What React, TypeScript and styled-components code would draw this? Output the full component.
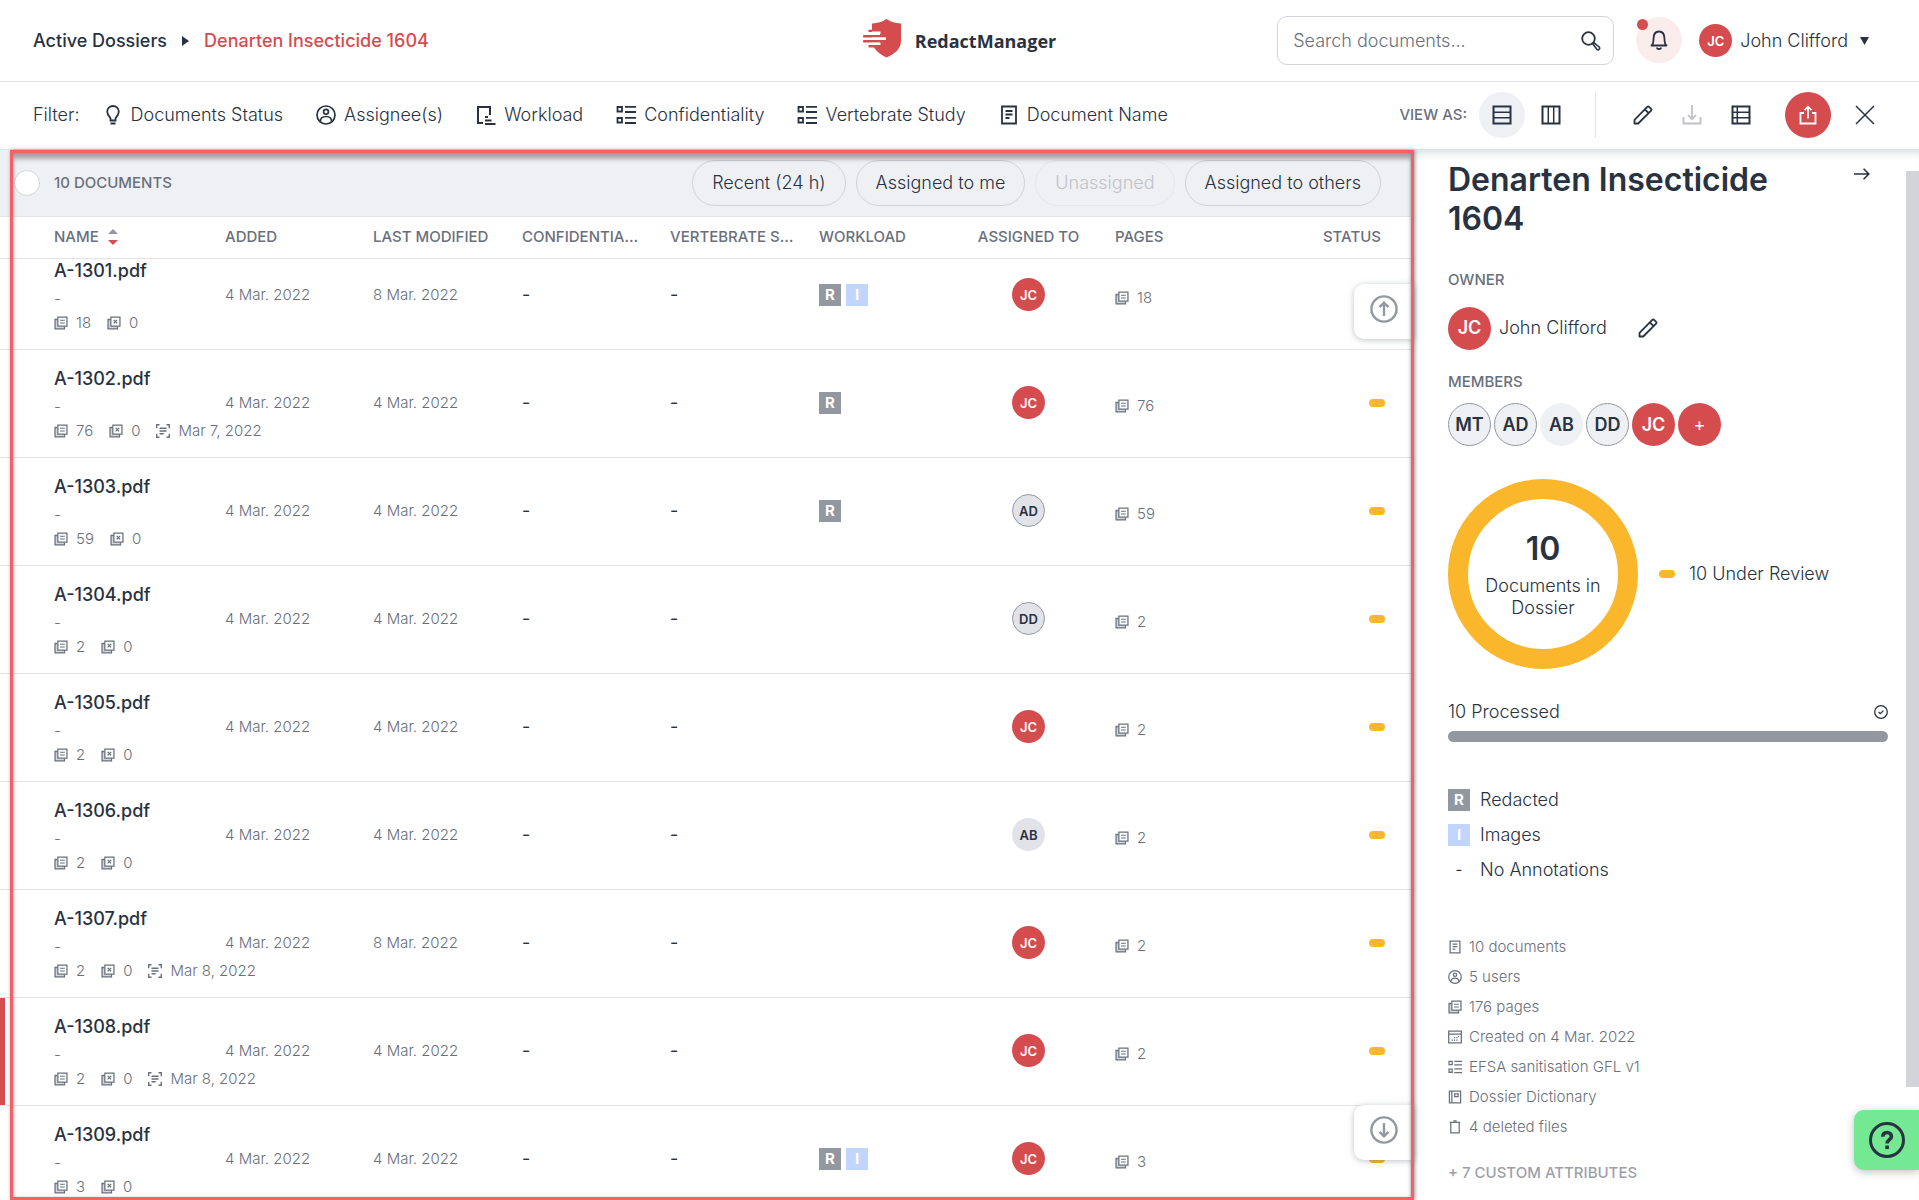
import React, { useLayoutEffect, useRef } from 'react';
import styled, { createGlobalStyle, css } from 'styled-components';

const c = {
  text: '#283241',
  muted: '#6a707b',
  soft: '#9398a0',
  red: '#d54c4f',
  yellow: '#fab72c',
  line: '#e2e4e8',
  panel: '#eff0f4',
};

const Global = createGlobalStyle`
  *, *::before, *::after { box-sizing: border-box; }
  body { margin: 0; background: #fff; color: ${c.text}; font-family: Inter, "Open Sans", sans-serif; font-size: 18px; font-weight: 300; line-height: 22px; }
  button, input { font: inherit; color: inherit; }
  button { border: 0; padding: 0; background: none; cursor: pointer; }
  a { color: inherit; text-decoration: none; }
  h1, h2, p, ul { margin: 0; padding: 0; }
  ul { list-style: none; }
  svg { display: block; flex: none; }
`;

/* ---------- icons ---------- */

const Stroke = styled.svg.attrs<{ $s?: number; $w?: number }>(({ $s = 20, $w = 2 }) => ({
  width: $s,
  height: $s,
  viewBox: '0 0 20 20',
  fill: 'none',
  stroke: 'currentColor',
  strokeWidth: $w,
  'aria-hidden': true,
}))<{ $s?: number; $w?: number }>``;

const BulbIcon = () => (
  <Stroke $w={1.8}><path d="M7.500 15.500v-2.200C6.300 12 4.200 9.800 4.200 6.800a5.800 5.800 0 0 1 11.600 0c0 3-2.100 5.200-3.300 6.500v2.200zM7.500 18.500h5" /></Stroke>
);
const UserIcon = ({ s }: { s?: number }) => (
  <Stroke $s={s} $w={1.7}><circle cx="10" cy="10" r="9" /><circle cx="10" cy="6.800" r="2.400" /><path d="M4.300 16.800c0-3.500 2.300-5.300 5.700-5.300s5.700 1.800 5.700 5.300" /></Stroke>
);
const WorkloadIcon = () => (
  <Stroke><path d="M7 18H2V2h12v8M9 12h3M9 15.500h6.500M9 19h10.500" /></Stroke>
);
const ListIcon = ({ s }: { s?: number }) => (
  <Stroke $s={s} $w={1.8}><path d="M1.500 2h4.500v4.500H1.500zM1.500 13h4.500v4.500H1.500zM9 1.800h11M9 7h11M9 12.800h11M9 18h11" /></Stroke>
);
const DocIcon = ({ s }: { s?: number }) => (
  <Stroke $s={s} $w={1.8}><path d="M3 1.500h14v17H3zM6.500 6h7M6.500 9.500h7M6.500 13h4" /></Stroke>
);
const PagesIcon = () => (
  <Stroke $s={14} $w={1.8}><path d="M5 5H1.500v13.500H15V15" fill="#d3d6db" /><path d="M5.500 1.500h13v13h-13z" fill="#fff" /><path d="M8.500 6h7M8.500 10h7" strokeWidth="1.600" /></Stroke>
);
const ExcludedIcon = () => (
  <Stroke $s={14} $w={1.8}><path d="M5 5H1.500v13.500H15V15" fill="#d3d6db" /><path d="M5.500 1.500h13v13h-13z" fill="#fff" /><path d="M9.500 5.500l5 5M14.500 5.500l-5 5" /></Stroke>
);
const ScanIcon = () => (
  <Stroke $s={14}><path d="M1 6V1h4M15 1h4v5M1 14v5h4M15 19h4v-5M5 6h10M5 10h10M5 14h6" /></Stroke>
);
const CalendarIcon = () => (
  <Stroke $s={14} $w={1.8}><path d="M1 1.500h18v17H1zM1 6h18" /><path d="M8.500 14.500h1.800M11.800 14.500h1.800M5 14.500h1.800M8.500 11h1.800M11.800 11h1.800M14.500 9.500h1.500" /></Stroke>
);
const BookIcon = () => (
  <Stroke $s={14} $w={1.8}><path d="M2 1.500h16v17H2zM5.500 1.500v17M9.500 5.500h5v4h-5z" /></Stroke>
);
const TrashIcon = () => (
  <Stroke $s={14} $w={1.8}><path d="M4 3.500h12v15H4zM2.500 3.500h15M7.500 1.200h5" /></Stroke>
);
const RowsIcon = () => (
  <Stroke><path d="M1.500 1.500h17v17h-17z" /><path d="M2 7.300h16M2 12.700h16" strokeWidth="1.500" /></Stroke>
);
const ColumnsIcon = () => (
  <Stroke><path d="M1.500 1.500h17v17h-17z" /><path d="M7.300 2v16M12.700 2v16" strokeWidth="1.500" /></Stroke>
);
const TableIcon = () => (
  <Stroke><path d="M1.500 1.500h17v17h-17z" /><path d="M2 7.300h16M2 12.700h16M6.300 2v16" strokeWidth="1.500" /></Stroke>
);
const PencilIcon = () => (
  <Stroke $w={1.8} strokeLinejoin="round"><path d="M1.500 18.500v-3.700L14.300 1.900c.6-.6 1.200-.6 1.800 0l2 2c.6.6.6 1.200 0 1.800L5.200 18.500zM11.800 4.300l3.900 3.900" /></Stroke>
);
const DownloadIcon = () => (
  <Stroke $w={1.8}><path d="M1.500 12v6.500h17V12M10 0v14M6 10.200l4 4 4-4" /></Stroke>
);
const ShareIcon = () => (
  <Stroke $w={1.8}><path d="M6 8H2.500v10.500h15V8H14M10 13.500V2M6.500 5.200L10 1.700l3.500 3.500" /></Stroke>
);
const CloseIcon = () => (
  <Stroke $w={1.5}><path d="M1 1l18 18M19 1L1 19" /></Stroke>
);
const SearchIcon = () => (
  <Stroke $w={1.8}><circle cx="7.500" cy="7.500" r="6.300" /><path d="M12.500 11.300l5.700 4.700c1.500 1.500-.8 3.700-2.300 2.300L11.500 12.500" strokeWidth="1.600" /></Stroke>
);
const BellIcon = () => (
  <Stroke $w={1.8}><path d="M2.500 15.500c2-1.500 2-3 2-6.500 0-5 2-7.500 5.500-7.500s5.500 2.500 5.500 7.500c0 3.500 0 5 2 6.500z" strokeLinejoin="round" /><path d="M8 17.500a2 1.500 0 0 0 4 0" /></Stroke>
);
const CheckCircleIcon = () => (
  <Stroke $s={14} $w={1.8}><circle cx="10" cy="10" r="9" /><path d="M6.500 10l2.500 2.300L13.500 8" /></Stroke>
);
const ArrowIcon = () => (
  <Stroke $s={16}><path d="M0 10h18M12 3.500l6.500 6.500-6.500 6.500" /></Stroke>
);
const CircleArrowIcon = ({ down }: { down?: boolean }) => (
  <Stroke $s={28} $w={1.7}><circle cx="10" cy="10" r="9" /><path d={down ? 'M10 5v9.500M6.800 11.300l3.200 3.200 3.200-3.200' : 'M10 15V5.500M6.800 8.700L10 5.500l3.200 3.200'} /></Stroke>
);
const HelpIcon = () => (
  <svg width="36" height="36" viewBox="0 0 36 36" fill="none" stroke={c.text} strokeWidth="3" aria-hidden="true">
    <circle cx="18" cy="18" r="16.500" />
    <path d="M13.800 14.800c0-2.800 1.800-4.300 4.300-4.300s4.300 1.500 4.300 3.900c0 3.200-4.300 3.200-4.300 7" strokeWidth="3.600" />
    <path d="M18.100 23.500v3.600" strokeWidth="3.600" />
  </svg>
);
const LogoIcon = () => (
  <svg width="38" height="43" viewBox="0 0 38 43" aria-hidden="true">
    <path fill={c.red} d="M9 4.500c6-.3 10-1.500 14.500-4.500C28 3 32 4.200 38 4.500V22c0 8-7 13.500-14.500 16.500C19 36.500 14 33 11 28.500H6.500a1 1 0 0 1 0-2.400H17v-2.600H1a1 1 0 0 1 0-2.400h22v-2.500H1a1 1 0 0 1 0-2.500h16v-3H6.500a1 1 0 0 1 0-2.400H9z" />
    <path fill="#fff" d="M9 12.500h8.500v2.600H9zM9 18.400h13.500v2.500H9zM9 23.700h8.500v2.400H9z" />
  </svg>
);
const SortIcon = () => (
  <svg width="10" height="16" viewBox="0 0 10 16" aria-hidden="true"><path d="M0 5l5-5 5 5z" fill={c.soft} /><path d="M0 11l5 5 5-5z" fill={c.red} /></svg>
);
const CaretRight = () => (
  <svg width="7" height="10" viewBox="0 0 7 10" aria-hidden="true"><path d="M0 0l7 5-7 5z" fill={c.text} /></svg>
);
const CaretDown = () => (
  <svg width="9" height="8" viewBox="0 0 9 8" aria-hidden="true"><path d="M0 0h9L4.500 8z" fill={c.text} /></svg>
);

/* ---------- shared parts ---------- */

const Avatar = styled.span<{ $size?: number; $tone?: 'red' | 'grey' | 'light'; $ring?: boolean }>`
  display: inline-flex;
  align-items: center;
  justify-content: center;
  flex: none;
  width: ${({ $size = 33 }) => $size}px;
  height: ${({ $size = 33 }) => $size}px;
  border-radius: 50%;
  font-size: ${({ $size = 33 }) => ($size > 40 ? 18 : 13)}px;
  font-weight: 600;
  line-height: 22px;
  vertical-align: middle;
  color: ${({ $tone = 'red' }) => ($tone === 'red' ? '#fff' : c.text)};
  background: ${({ $tone = 'red' }) => ({ red: c.red, grey: '#e2e3e9', light: c.panel })[$tone]};
  ${({ $ring }) => $ring && css`border: 1px solid ${c.soft};`}
`;
const Tag = styled.span<{ $kind: string }>`
  display: inline-flex;
  align-items: center;
  justify-content: center;
  width: 22px;
  height: 22px;
  font-size: 15px;
  font-weight: ${({ $kind }) => ($kind === '-' ? 400 : 700)};
  color: ${({ $kind }) => ($kind === '-' ? c.text : '#fff')};
  background: ${({ $kind }) => ($kind === 'R' ? c.soft : $kind === 'I' ? '#c1d5ff' : 'transparent')};
`;
const Pill = styled.span`
  display: block;
  flex: none;
  width: 16px;
  height: 8px;
  border-radius: 4px;
  background: ${c.yellow};
`;
const Label = styled.h2`
  font-size: 15px;
  font-weight: 500;
  color: ${c.muted};
`;

/* ---------- top bars ---------- */

const Page = styled.div`
  display: flex;
  flex-direction: column;
  height: 100vh;
  overflow: hidden;
`;
const Header = styled.header`
  display: grid;
  grid-template-columns: 1fr auto 1fr;
  align-items: center;
  flex: none;
  height: 82px;
  padding: 0 50px 0 33px;
  border-bottom: 1px solid ${c.line};
`;
const Crumbs = styled.nav`
  display: flex;
  align-items: center;
  gap: 15px;
  font-weight: 500;
`;
const Crumb = styled.a<{ $active?: boolean }>`
  color: ${({ $active }) => ($active ? c.red : c.text)};
`;
const Brand = styled.a`
  display: flex;
  align-items: center;
  gap: 14px;
  padding-left: 17px;
  font-family: "Open Sans", sans-serif;
  font-weight: 700;
`;
const HeaderRight = styled.div`
  display: flex;
  align-items: center;
  justify-content: flex-end;
`;
const SearchBox = styled.label`
  display: flex;
  align-items: center;
  width: 337px;
  height: 49px;
  padding: 0 12px 0 15px;
  border: 1px solid #d3d5da;
  border-radius: 10px;
`;
const SearchInput = styled.input`
  flex: 1;
  min-width: 0;
  padding: 0;
  border: 0;
  outline: 0;
  background: none;
  &::placeholder { color: ${c.muted}; opacity: 1; }
`;
const BellButton = styled.button`
  position: relative;
  display: grid;
  place-items: center;
  width: 46px;
  height: 46px;
  margin: 0 17px 2px 22px;
  border-radius: 50%;
  background: #fbecec;
  &::after {
    content: '';
    position: absolute;
    top: 2px;
    left: 1px;
    width: 11px;
    height: 11px;
    border-radius: 50%;
    background: ${c.red};
  }
`;
const UserButton = styled.button`
  display: flex;
  align-items: center;
  gap: 8px;
  & > svg { margin-left: 4px; }
`;

const Toolbar = styled.div`
  position: relative;
  z-index: 2;
  display: flex;
  align-items: center;
  justify-content: space-between;
  flex: none;
  height: 68px;
  padding: 0 31px 2px 33px;
  border-bottom: 1px solid ${c.line};
  background: #fff;
`;
const Filters = styled.div`
  display: flex;
  align-items: center;
  gap: 33px;
`;
const FilterLabel = styled.span`
  margin-right: -10px;
`;
const FilterButton = styled.button`
  display: flex;
  align-items: center;
  gap: 8px;
`;
const Actions = styled.div`
  display: flex;
  align-items: center;
  gap: 3px;
`;
const ViewAs = styled.span`
  margin-right: 9px;
  font-size: 15px;
  font-weight: 500;
  color: ${c.muted};
`;
const IconButton = styled.button<{ $tone?: 'active' | 'primary' }>`
  display: grid;
  place-items: center;
  width: 46px;
  height: 46px;
  border-radius: 50%;
  ${({ $tone }) => $tone === 'active' && css`background: ${c.panel};`}
  ${({ $tone }) => $tone === 'primary' && css`margin: 0 8px 0 18px; background: ${c.red}; color: #fff;`}
  &:disabled { color: #bfc1c4; }
`;
const Divider = styled.span`
  width: 1px;
  height: 46px;
  margin: 0 21px 0 18px;
  background: ${c.line};
`;

/* ---------- documents ---------- */

const Body = styled.main`
  display: flex;
  flex: 1;
  min-height: 0;
`;
const ListPanel = styled.section`
  position: relative;
  display: flex;
  flex-direction: column;
  flex: 1;
  min-width: 0;
`;
const Highlight = styled.div`
  position: absolute;
  inset: 0 0 0 10px;
  z-index: 3;
  border: 3px solid #f46066;
  box-shadow: 1px 0 4px rgba(0, 0, 0, 0.4), inset 0 6px 4px rgba(0, 0, 0, 0.3), inset 0 0 3px rgba(0, 0, 0, 0.2);
  pointer-events: none;
`;
const SubBar = styled.div`
  display: flex;
  align-items: center;
  justify-content: space-between;
  flex: none;
  height: 67px;
  padding: 0 33px 1px 14px;
  border-bottom: 1px solid ${c.line};
  background: ${c.panel};
`;
const SelectAll = styled.label`
  display: flex;
  align-items: center;
  gap: 14px;
  font-size: 15px;
  font-weight: 500;
  color: ${c.muted};
`;
const RoundCheck = styled.input`
  appearance: none;
  width: 26px;
  height: 26px;
  margin: 0;
  border: 1px solid #d3d5da;
  border-radius: 50%;
  background: #fff;
`;
const Chips = styled.div`
  display: flex;
  gap: 10px;
`;
const Chip = styled.button`
  height: 46px;
  padding: 0 19px;
  border: 1px solid #d0d2d8;
  border-radius: 23px;
  &:disabled { color: #bfc2c8; border-color: #e4e6ea; }
`;
const Scroller = styled.div`
  flex: 1;
  min-height: 0;
  overflow-y: auto;
  scrollbar-width: none;
`;
const Table = styled.table`
  width: 100%;
  table-layout: fixed;
  border-collapse: separate;
  border-spacing: 0;
`;
const Col = styled.col<{ $w?: number }>`
  width: ${({ $w }) => ($w ? `${$w}px` : 'auto')};
`;
const Th = styled.th<{ $align?: string }>`
  position: sticky;
  top: 0;
  z-index: 1;
  height: 42px;
  padding: 0 12px 2px;
  border-bottom: 1px solid ${c.line};
  background: #fff;
  font-size: 15px;
  font-weight: 500;
  color: ${c.muted};
  text-align: ${({ $align = 'left' }) => $align};
  white-space: nowrap;
  overflow: hidden;
  text-overflow: ellipsis;
  &:first-child { padding-left: 54px; }
  &:last-child { padding-right: 33px; }
`;
const SortLabel = styled.span`
  display: flex;
  align-items: center;
  gap: 9px;
`;
const Row = styled.tr<{ $marked?: boolean }>`
  & > td:first-child { ${({ $marked }) => $marked && css`box-shadow: inset 5px 0 ${c.red};`} }
`;
const Td = styled.td<{ $align?: string }>`
  height: 108px;
  padding: 0 12px 2px;
  border-bottom: 1px solid ${c.line};
  font-weight: 400;
  text-align: ${({ $align = 'left' }) => $align};
  vertical-align: middle;
  white-space: nowrap;
  &:first-child { padding-left: 54px; }
  &:last-child { padding-right: 29px; }
`;
const Name = styled.div`
  font-weight: 500;
  line-height: 26px;
`;
const Small = styled.div`
  font-size: 15px;
  font-weight: 300;
  line-height: 30px;
  color: ${c.muted};
`;
const Stat = styled.span`
  display: flex;
  align-items: center;
  gap: 8px;
`;
const Stats = styled.div`
  display: flex;
  gap: 16px;
  font-size: 15px;
  font-weight: 300;
  line-height: 18px;
  color: ${c.muted};
`;
const PageCount = styled(Stats)`
  padding-top: 6px;
`;
const StatusCell = styled.div`
  display: flex;
  justify-content: flex-end;
`;
const Tags = styled.span`
  display: flex;
  gap: 5px;
`;
const JumpButton = styled.button<{ $end?: boolean }>`
  position: absolute;
  right: 0;
  ${({ $end }) => ($end ? 'bottom: 40px;' : 'top: 134px;')}
  z-index: 2;
  width: 60px;
  height: 55px;
  padding: 0 16px 6px;
  border-radius: 10px 0 0 10px;
  background: #fff;
  color: ${c.soft};
  box-shadow: 0 1px 6px rgba(40, 50, 65, 0.3);
`;

/* ---------- details ---------- */

const Aside = styled.aside`
  display: flex;
  flex: none;
  width: 505px;
  box-shadow: inset 0 8px 8px -6px rgba(40, 50, 65, 0.2);
`;
const Details = styled.div`
  flex: 1;
  min-width: 0;
  padding: 10px 18px 0 34px;
`;
const TitleRow = styled.div`
  display: flex;
  align-items: flex-start;
  justify-content: space-between;
  gap: 60px;
  padding-right: 18px;
`;
const Title = styled.h1`
  font-size: 32px;
  font-weight: 600;
  line-height: 39px;
`;
const CollapseButton = styled.button`
  padding-top: 6px;
`;
const Section = styled.section<{ $top: number }>`
  margin-top: ${({ $top }) => $top}px;
`;
const Owner = styled.div`
  display: flex;
  align-items: center;
  gap: 8px;
  margin-top: 14px;
  & > button { margin-left: 10px; }
`;
const Members = styled.div`
  display: flex;
  gap: 3px;
  margin-top: 10px;
`;
const AddMember = styled.button`
  width: 43px;
  height: 43px;
  border-radius: 50%;
  background: ${c.red};
  color: #fff;
  font-weight: 400;
`;
const ChartRow = styled.div`
  display: flex;
  align-items: center;
  gap: 21px;
`;
const Donut = styled.div`
  display: flex;
  flex-direction: column;
  align-items: center;
  justify-content: center;
  width: 190px;
  height: 190px;
  border: 20px solid ${c.yellow};
  border-radius: 50%;
  text-align: center;
`;
const DonutValue = styled.strong`
  margin-bottom: 7px;
  font-size: 32px;
  font-weight: 600;
  line-height: 39px;
`;
const Legend = styled.span`
  display: flex;
  align-items: center;
  gap: 14px;
`;
const ProgressHead = styled.div`
  display: flex;
  align-items: center;
  justify-content: space-between;
`;
const ProgressBar = styled.div`
  height: 11px;
  margin-top: 8px;
  border-radius: 6px;
  background: ${c.soft};
`;
const KeyList = styled.ul`
  display: grid;
  gap: 13px;
`;
const KeyItem = styled.li`
  display: flex;
  align-items: center;
  gap: 10px;
`;
const FactList = styled.ul`
  display: grid;
  gap: 8px;
  font-size: 15px;
  color: ${c.muted};
`;
const Fact = styled.li`
  display: flex;
  align-items: center;
  gap: 7px;
`;
const MoreButton = styled.button`
  margin-top: 24px;
  font-size: 15px;
  font-weight: 500;
  color: #9ca0a8;
`;
const Track = styled.div`
  display: flex;
  flex-direction: column;
  width: 13px;
  padding-top: 21px;
`;
const Thumb = styled.div`
  flex: 0 0 89%;
  background: #d3d4da;
`;
const HelpButton = styled.button`
  position: fixed;
  right: 0;
  bottom: 30px;
  z-index: 4;
  width: 65px;
  height: 60px;
  padding-left: 15px;
  border-radius: 10px 0 0 10px;
  background: #74e893;
  box-shadow: 0 2px 8px rgba(40, 50, 65, 0.3);
`;

/* ---------- data ---------- */

type Doc = { name: string; pages: number; ocr?: string; modified?: string; tags?: string[]; who: string; marked?: boolean };

const docs: Doc[] = [
  { name: 'A-1301.pdf', pages: 18, modified: '8 Mar. 2022', tags: ['R', 'I'], who: 'JC' },
  { name: 'A-1302.pdf', pages: 76, ocr: 'Mar 7, 2022', tags: ['R'], who: 'JC' },
  { name: 'A-1303.pdf', pages: 59, tags: ['R'], who: 'AD' },
  { name: 'A-1304.pdf', pages: 2, who: 'DD' },
  { name: 'A-1305.pdf', pages: 2, who: 'JC' },
  { name: 'A-1306.pdf', pages: 2, who: 'AB' },
  { name: 'A-1307.pdf', pages: 2, ocr: 'Mar 8, 2022', modified: '8 Mar. 2022', who: 'JC' },
  { name: 'A-1308.pdf', pages: 2, ocr: 'Mar 8, 2022', who: 'JC', marked: true },
  { name: 'A-1309.pdf', pages: 3, tags: ['R', 'I'], who: 'JC' },
];

const filters = [
  { label: 'Documents Status', icon: <BulbIcon /> },
  { label: 'Assignee(s)', icon: <UserIcon /> },
  { label: 'Workload', icon: <WorkloadIcon /> },
  { label: 'Confidentiality', icon: <ListIcon /> },
  { label: 'Vertebrate Study', icon: <ListIcon /> },
  { label: 'Document Name', icon: <DocIcon /> },
];

const facts = [
  { label: '10 documents', icon: <DocIcon s={14} /> },
  { label: '5 users', icon: <UserIcon s={14} /> },
  { label: '176 pages', icon: <PagesIcon /> },
  { label: 'Created on 4 Mar. 2022', icon: <CalendarIcon /> },
  { label: 'EFSA sanitisation GFL v1', icon: <ListIcon s={14} /> },
  { label: 'Dossier Dictionary', icon: <BookIcon /> },
  { label: '4 deleted files', icon: <TrashIcon /> },
];

const DocRow = ({ doc }: { doc: Doc }) => (
  <Row $marked={doc.marked}>
    <Td>
      <Name>{doc.name}</Name>
      <Small>-</Small>
      <Stats>
        <Stat><PagesIcon />{doc.pages}</Stat>
        <Stat><ExcludedIcon />0</Stat>
        {doc.ocr && <Stat><ScanIcon />{doc.ocr}</Stat>}
      </Stats>
    </Td>
    <Td><Small>4 Mar. 2022</Small></Td>
    <Td><Small>{doc.modified ?? '4 Mar. 2022'}</Small></Td>
    <Td>-</Td>
    <Td>-</Td>
    <Td><Tags>{doc.tags?.map((t) => <Tag key={t} $kind={t}>{t}</Tag>)}</Tags></Td>
    <Td $align="center">
      <Avatar $tone={doc.who === 'JC' ? 'red' : 'grey'} $ring={doc.who === 'AD' || doc.who === 'DD'}>{doc.who}</Avatar>
    </Td>
    <Td><PageCount><Stat><PagesIcon />{doc.pages}</Stat></PageCount></Td>
    <Td><StatusCell><Pill /></StatusCell></Td>
  </Row>
);

export default function App() {
  const scroller = useRef<HTMLDivElement>(null);

  useLayoutEffect(() => {
    if (scroller.current) scroller.current.scrollTop = 17;
  }, []);

  const jump = (top: number) => scroller.current?.scrollTo({ top, behavior: 'smooth' });

  return (
    <Page>
      <Global />
      <Header>
        <Crumbs aria-label="Breadcrumb">
          <Crumb href="#dossiers">Active Dossiers</Crumb>
          <CaretRight />
          <Crumb href="#dossier" $active>Denarten Insecticide 1604</Crumb>
        </Crumbs>
        <Brand href="#home"><LogoIcon />RedactManager</Brand>
        <HeaderRight>
          <SearchBox>
            <SearchInput type="text" placeholder="Search documents..." aria-label="Search documents" />
            <SearchIcon />
          </SearchBox>
          <BellButton aria-label="Notifications"><BellIcon /></BellButton>
          <UserButton><Avatar>JC</Avatar>John Clifford<CaretDown /></UserButton>
        </HeaderRight>
      </Header>

      <Toolbar>
        <Filters>
          <FilterLabel>Filter:</FilterLabel>
          {filters.map((f) => <FilterButton key={f.label}>{f.icon}{f.label}</FilterButton>)}
        </Filters>
        <Actions>
          <ViewAs>VIEW AS:</ViewAs>
          <IconButton $tone="active" aria-label="List view"><RowsIcon /></IconButton>
          <IconButton aria-label="Board view"><ColumnsIcon /></IconButton>
          <Divider />
          <IconButton aria-label="Edit"><PencilIcon /></IconButton>
          <IconButton aria-label="Download" disabled><DownloadIcon /></IconButton>
          <IconButton aria-label="Report"><TableIcon /></IconButton>
          <IconButton $tone="primary" aria-label="Upload"><ShareIcon /></IconButton>
          <IconButton aria-label="Close"><CloseIcon /></IconButton>
        </Actions>
      </Toolbar>

      <Body>
        <ListPanel>
          <SubBar>
            <SelectAll><RoundCheck type="checkbox" />10 DOCUMENTS</SelectAll>
            <Chips>
              <Chip>Recent (24 h)</Chip>
              <Chip>Assigned to me</Chip>
              <Chip disabled>Unassigned</Chip>
              <Chip>Assigned to others</Chip>
            </Chips>
          </SubBar>
          <Scroller ref={scroller}>
            <Table>
              <colgroup>
                <Col $w={213} /><Col $w={148} /><Col $w={149} /><Col $w={148} /><Col $w={149} />
                <Col $w={147} /><Col $w={149} /><Col $w={149} /><Col />
              </colgroup>
              <thead>
                <tr>
                  <Th><SortLabel>NAME<SortIcon /></SortLabel></Th>
                  <Th>ADDED</Th>
                  <Th>LAST MODIFIED</Th>
                  <Th>CONFIDENTIALITY</Th>
                  <Th>VERTEBRATE STUDY</Th>
                  <Th>WORKLOAD</Th>
                  <Th $align="center">ASSIGNED TO</Th>
                  <Th>PAGES</Th>
                  <Th $align="right">STATUS</Th>
                </tr>
              </thead>
              <tbody>{docs.map((d) => <DocRow key={d.name} doc={d} />)}</tbody>
            </Table>
          </Scroller>
          <JumpButton aria-label="Scroll to top" onClick={() => jump(0)}><CircleArrowIcon /></JumpButton>
          <JumpButton $end aria-label="Scroll to bottom" onClick={() => jump(9999)}><CircleArrowIcon down /></JumpButton>
          <Highlight />
        </ListPanel>

        <Aside>
          <Details>
            <TitleRow>
              <Title>Denarten Insecticide 1604</Title>
              <CollapseButton aria-label="Collapse details"><ArrowIcon /></CollapseButton>
            </TitleRow>
            <Section $top={31}>
              <Label>OWNER</Label>
              <Owner>
                <Avatar $size={43}>JC</Avatar>John Clifford
                <IconButton aria-label="Edit owner"><PencilIcon /></IconButton>
              </Owner>
            </Section>
            <Section $top={20}>
              <Label>MEMBERS</Label>
              <Members>
                <Avatar $size={43} $tone="light" $ring>MT</Avatar>
                <Avatar $size={43} $tone="light" $ring>AD</Avatar>
                <Avatar $size={43} $tone="light">AB</Avatar>
                <Avatar $size={43} $tone="light" $ring>DD</Avatar>
                <Avatar $size={43}>JC</Avatar>
                <AddMember aria-label="Add member">+</AddMember>
              </Members>
            </Section>
            <Section $top={33}>
              <ChartRow>
                <Donut><DonutValue>10</DonutValue>Documents in<br />Dossier</Donut>
                <Legend><Pill />10 Under Review</Legend>
              </ChartRow>
            </Section>
            <Section $top={32}>
              <ProgressHead>10 Processed<CheckCircleIcon /></ProgressHead>
              <ProgressBar />
            </Section>
            <Section $top={47}>
              <KeyList>
                <KeyItem><Tag $kind="R">R</Tag>Redacted</KeyItem>
                <KeyItem><Tag $kind="I">I</Tag>Images</KeyItem>
                <KeyItem><Tag $kind="-">-</Tag>No Annotations</KeyItem>
              </KeyList>
            </Section>
            <Section $top={55}>
              <FactList>{facts.map((f) => <Fact key={f.label}>{f.icon}{f.label}</Fact>)}</FactList>
              <MoreButton>+ 7 CUSTOM ATTRIBUTES</MoreButton>
            </Section>
          </Details>
          <Track><Thumb /></Track>
        </Aside>
      </Body>
      <HelpButton aria-label="Help"><HelpIcon /></HelpButton>
    </Page>
  );
}
